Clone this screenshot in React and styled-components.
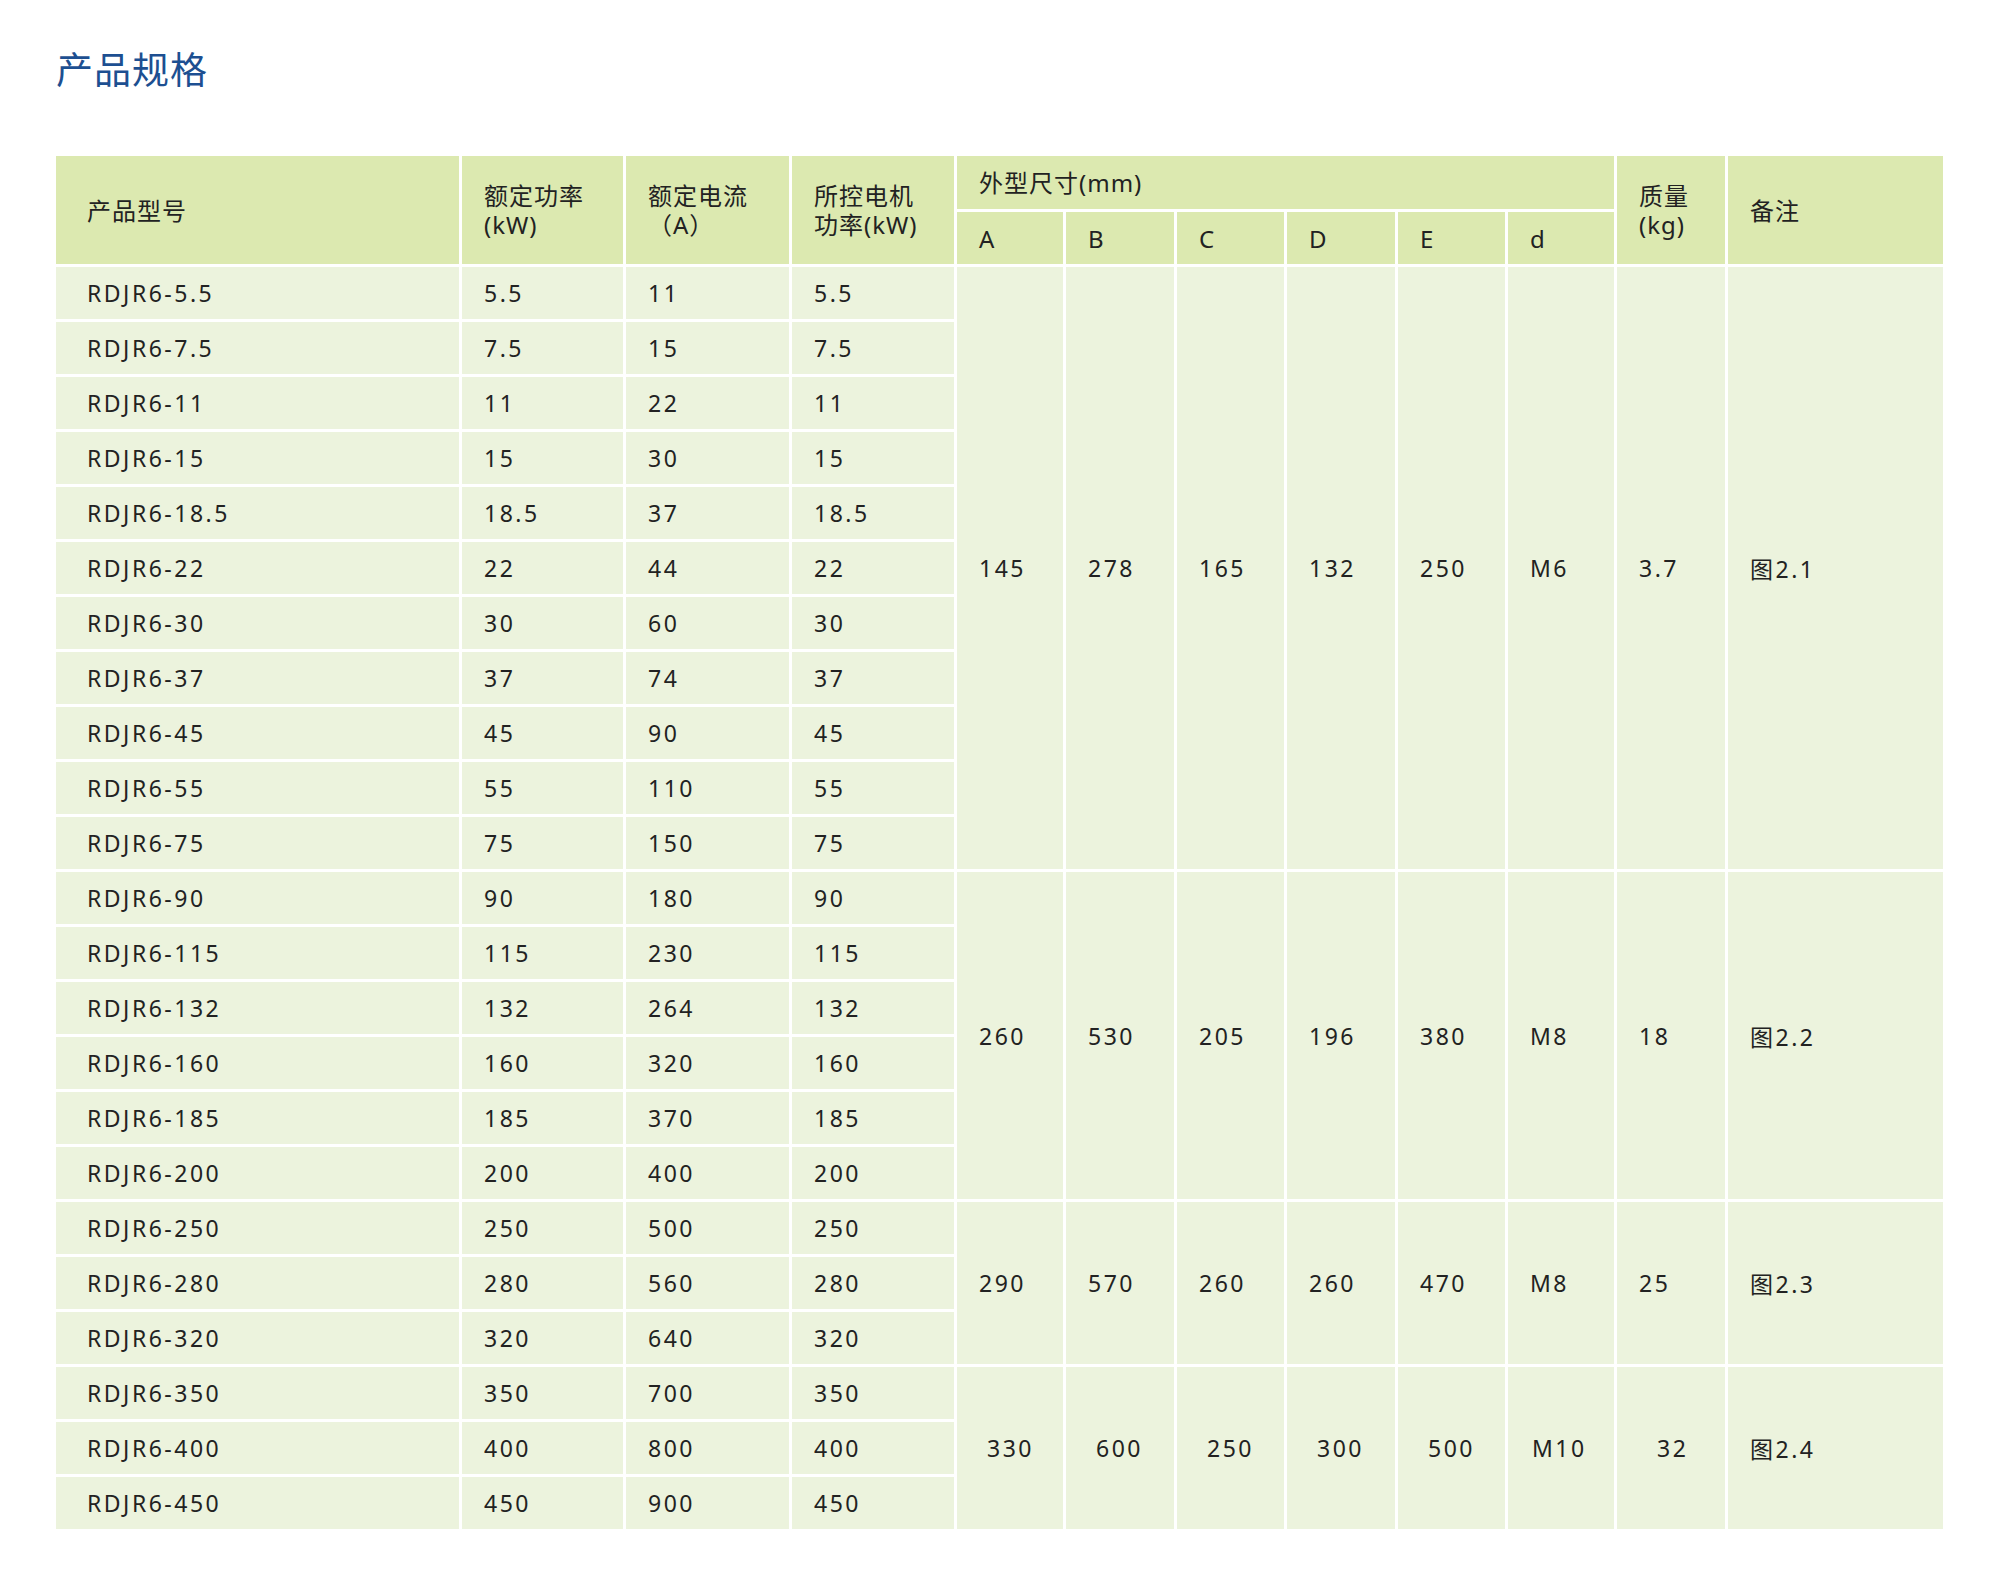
import React from "react";
import styled, { createGlobalStyle } from "styled-components";

const Global = createGlobalStyle`
  body { margin: 0; background: #fff; font-family: "Noto Sans", "Noto Sans CJK SC", sans-serif; }
`;

const Page = styled.div`
  width: 2000px;
  height: 1577px;
  padding: 42px 57px 0 53px;
  box-sizing: border-box;
`;

const Title = styled.h1`
  margin: 0 0 62px 3px;
  font-size: 37px;
  font-weight: 400;
  color: #1d4f91;
  font-family: "Noto Sans CJK SC", sans-serif;
  letter-spacing: 1px;
  line-height: 52px;
`;

const Table = styled.table`
  border-collapse: collapse;
  table-layout: fixed;
  width: 1890px;
  color: #222;
  font-size: 23px;
  letter-spacing: 2.5px;
`;

const Th = styled.th`
  background: #dce9b0;
  border: 3px solid #fff;
  border-top: none;
  font-weight: 400;
  text-align: left;
  padding: 0 0 0 ${p => p.$pl || 22}px;
  height: ${p => p.$h || 54}px;
  line-height: 29px;
  letter-spacing: 1px;
  font-size: 24px;
  vertical-align: middle;
  font-family: "Noto Sans", "Noto Sans CJK SC", sans-serif;
`;

const Td = styled.td`
  background: #ecf3dd;
  border: 3px solid #fff;
  height: 52px;
  padding: 0 0 0 ${p => p.$pl || 22}px;
  white-space: nowrap;
`;

const rows = [
  ["5.5", "5.5", "11"], ["7.5", "7.5", "15"], ["11", "11", "22"], ["15", "15", "30"],
  ["18.5", "18.5", "37"], ["22", "22", "44"], ["30", "30", "60"], ["37", "37", "74"],
  ["45", "45", "90"], ["55", "55", "110"], ["75", "75", "150"], ["90", "90", "180"],
  ["115", "115", "230"], ["132", "132", "264"], ["160", "160", "320"], ["185", "185", "370"],
  ["200", "200", "400"], ["250", "250", "500"], ["280", "280", "560"], ["320", "320", "640"],
  ["350", "350", "700"], ["400", "400", "800"], ["450", "450", "900"],
];

const groups = {
  0: { span: 11, v: ["145", "278", "165", "132", "250", "M6", "3.7", "图2.1"] },
  11: { span: 6, v: ["260", "530", "205", "196", "380", "M8", "18", "图2.2"] },
  17: { span: 3, v: ["290", "570", "260", "260", "470", "M8", "25", "图2.3"] },
  20: { span: 3, v: ["330", "600", "250", "300", "500", "M10", "32", "图2.4"], shift: true },
};

const widths = [406, 164, 166, 165, 109, 111, 110, 111, 110, 109, 111, 218];

const pad = (shift, j) => {
  if (!shift) return 22;
  if (j === 7) return 22;
  if (j === 5) return 24;
  if (j === 6) return 40;
  return 30;
};

export default function App() {
  return (
    <Page>
      <Global />
      <Title>产品规格</Title>
      <Table>
        <colgroup>
          {widths.map((w, i) => <col key={i} style={{ width: w }} />)}
        </colgroup>
        <thead>
          <tr>
            <Th rowSpan={2} $pl={31}>产品型号</Th>
            <Th rowSpan={2}>额定功率<br />(kW)</Th>
            <Th rowSpan={2}>额定电流<br />（A）</Th>
            <Th rowSpan={2}>所控电机<br />功率(kW)</Th>
            <Th colSpan={6} $h={53}>外型尺寸(mm)</Th>
            <Th rowSpan={2}>质量<br />(kg)</Th>
            <Th rowSpan={2}>备注</Th>
          </tr>
          <tr>
            {["A", "B", "C", "D", "E", "d"].map(l => <Th key={l} $h={52}>{l}</Th>)}
          </tr>
        </thead>
        <tbody>
          {rows.map((r, i) => {
            const g = groups[i];
            return (
              <tr key={i}>
                <Td $pl={31}>RDJR6-{r[0]}</Td>
                <Td>{r[1]}</Td>
                <Td>{r[2]}</Td>
                <Td>{r[1]}</Td>
                {g && g.v.map((v, j) => (
                  <Td key={j} rowSpan={g.span} $pl={pad(g.shift, j)}>{v}</Td>
                ))}
              </tr>
            );
          })}
        </tbody>
      </Table>
    </Page>
  );
}
